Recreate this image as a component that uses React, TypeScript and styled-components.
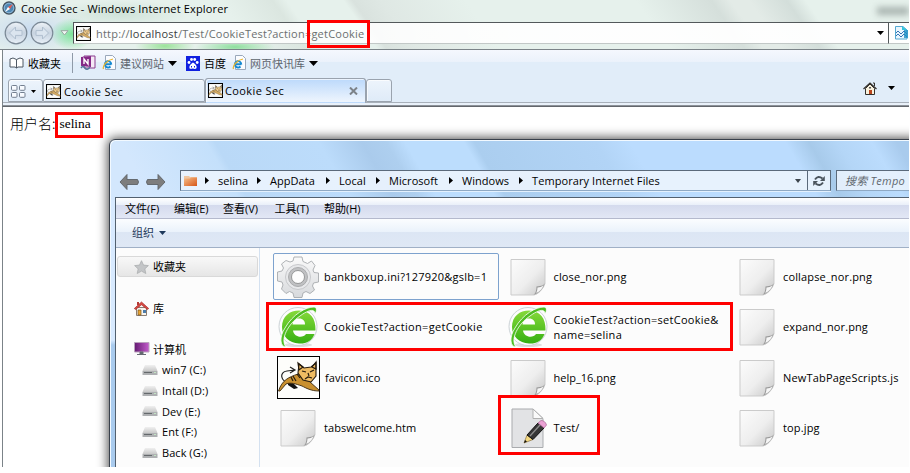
import React from "react";
import styled, { createGlobalStyle } from "styled-components";

const GlobalStyle = createGlobalStyle`
  html, body { margin: 0; background: #fff; overflow: hidden; }
  * { box-sizing: border-box; }
  svg { display: block; flex: none; }
`;

const Screen = styled.main`
  position: relative;
  width: 909px;
  height: 467px;
  overflow: hidden;
  background: #fff;
  color: #000;
  font: 11px/15px "Open Sans", "Noto Sans CJK SC", sans-serif;
`;

const Browser = styled.section`
  display: flex;
  flex-direction: column;
  height: 100%;
`;

const Label = styled.span<{ $ls?: number; $ml?: number; $color?: string; $size?: number }>`
  flex: none;
  white-space: nowrap;
  letter-spacing: ${(p) => p.$ls ?? 0}px;
  margin-left: ${(p) => p.$ml ?? 0}px;
  color: ${(p) => p.$color ?? "inherit"};
  font-size: ${(p) => p.$size ?? 11}px;
`;

const Chrome = styled.header`
  height: 50px;
  flex: none;
  border-bottom: 1px solid #7b8388;
  background:
    radial-gradient(ellipse 22px 16px at 72px 34px, #62e283cc, transparent),
    radial-gradient(ellipse 30px 9px at 165px 46px, #9be39a, transparent),
    radial-gradient(ellipse 40px 8px at 235px 47px, #8edf9d, transparent),
    radial-gradient(ellipse 60px 26px at 30px 30px, #c9dbf0, transparent),
    radial-gradient(ellipse 70px 14px at 120px 14px, #c4dcd0aa, transparent),
    linear-gradient(55deg, transparent 27%, #dbe6e0 32.5%, transparent 34%, transparent 40%, #d9e2de 41%, #dfe8e4 44%, transparent 53%, transparent 71%, #d5dfdb 79%, #e3ebe7 81%, #e3ebe7 83%, #d3deda 87%, transparent 89%),
    #e6f1ec;
`;

const TitleBar = styled.div`
  height: 22px;
  display: flex;
  align-items: flex-start;
  padding: 1px 0 0 2px;
`;

const TitleBlur = styled.span`
  width: 32px;
  height: 8px;
  margin: 6px 0 0 auto;
  filter: blur(3px);
  background: #a9b4b0;
`;

const AddressRow = styled.div`
  height: 22px;
  display: flex;
  align-items: center;
  padding-left: 4px;
`;

const AddressField = styled.div`
  display: flex;
  align-items: center;
  flex: none;
  width: 816px;
  height: 22px;
  margin-left: 4px;
  padding: 0 4px 0 2px;
  border: 1px solid #53595b;
  border-bottom-color: #c2c8c7;
  background: linear-gradient(90deg, #fffffff0, #ffffffd9 30%, #fffffff0 60%, #fffffff5);
`;

const Tail = styled.div`
  display: flex;
  align-items: center;
  padding-left: 6px;
  flex: 1;
  min-width: 0;
  height: 22px;
  border-top: 1px solid #53595b;
  border-bottom: 1px solid #c2c8c7;
  background: #fffffff0;
  overflow: hidden;
`;

const Spacer = styled.div`
  flex: 1;
`;

const Favorites = styled.nav`
  height: 28px;
  flex: none;
  display: flex;
  align-items: center;
  margin-left: 2px;
  padding: 0 0 2px 6px;
  border-left: 1px solid #7b8388;
  background: linear-gradient(#f5f8fe, #ebf2fb 12px, #e1edf9 12px);
`;

const FavoritesRule = styled.i`
  width: 1px;
  height: 20px;
  margin: 0 7px 0 11px;
  background: #8f9aa8;
`;

const TabRow = styled.div`
  height: 29px;
  flex: none;
  display: flex;
  align-items: flex-end;
  margin-left: 2px;
  padding: 0 0 4px 5px;
  border-left: 1px solid #7b8388;
  border-bottom: 1px solid #63676d;
  background: linear-gradient(#e1edf9 24px, #a8b0ba 24px, #a8b0ba 25px, #e9f1fa 25px, #e9f1fa 27px, #8d9299 27px);
`;

const HomeTools = styled.div`
  display: flex;
  align-items: center;
  align-self: flex-start;
  height: 20px;
  padding-right: 14px;
`;

const Tab = styled.div<{ $width: number; $active?: boolean }>`
  width: ${(p) => p.$width}px;
  height: ${(p) => (p.$active ? 25 : 23)}px;
  display: flex;
  align-items: center;
  padding: ${(p) => (p.$active ? "0 7px 0 2px" : "1px 6px 0 2px")};
  margin-bottom: ${(p) => (p.$active ? -1 : 0)}px;
  border: 1px solid #9aa3ae;
  border-bottom-color: ${(p) => (p.$active ? "transparent" : "#9aa3ae")};
  border-radius: 3px 3px 0 0;
  box-shadow: inset 1px 1px #ffffffb0;
  background: ${(p) => (p.$active ? "linear-gradient(#bcd9fb, #eef5fd)" : "linear-gradient(#edf4fc, #dfebf8)")};
`;

const Page = styled.div`
  flex: 1;
  display: flex;
  align-items: flex-start;
  margin-left: 2px;
  padding: 7px 0 0 7px;
  border-left: 1px solid #7b8388;
  font: 300 14px/18px "Noto Sans CJK SC", sans-serif;
`;

const PageValue = styled.span`
  margin-left: 4px;
  font: 13.4px/19px "Liberation Serif", serif;
`;

const Explorer = styled.section`
  position: absolute;
  left: 109px;
  top: 139px;
  width: 830px;
  height: 350px;
  display: flex;
  flex-direction: column;
  padding-left: 5px;
  border: 1.5px solid #39414c;
  border-radius: 6px 0 0 0;
  box-shadow: 0 0 11px 1px #000000b8, inset 1px 1px #f2f9ff;
  background:
    linear-gradient(60deg, #d3e7fd 5%, #c4e0fb 15%, #bad9f7 16%, #bcdcfb 28%, #aacbec 33%, #aecfef 35.8%, #bcddfd 38%, #bcddfd 44.8%, #abceef 46%, #b2d4f6 60%, #bbdcfe 64%, #bbdcfe 82%, #a7caea 84.7%, #b4d6f7 88%, #bbdcfd 92%, #a9cbed 94.800%) 0 0 / 830px 60px no-repeat,
    linear-gradient(#d8eaff 0 200px, #a9cbee 205px);
`;

const LocationRow = styled.div`
  height: 57px;
  flex: none;
  display: flex;
  align-items: flex-end;
  padding: 0 0 6px 4px;
`;

const Breadcrumb = styled.div`
  flex: none;
  width: 651px;
  height: 21px;
  display: flex;
  align-items: center;
  margin-left: 14px;
  padding-left: 2px;
  border: 1px solid #5b6a7b;
  border-bottom-color: #8fa9c4;
  box-shadow: 0 1px #e4f1fd;
  background: #eaf3fdeb;
`;

const Reload = styled.div`
  width: 23px;
  height: 19px;
  display: grid;
  place-items: center;
  border-left: 1px solid #5b6a7b;
`;

const Search = styled.div`
  flex: none;
  width: 110px;
  height: 21px;
  display: flex;
  align-items: center;
  margin-left: 5px;
  padding-left: 8px;
  border: 1px solid #5b6a7b;
  border-bottom-color: #8fa9c4;
  background: #e9f3fde0;
  color: #60676e;
  font-style: italic;
`;

const Frame = styled.div`
  flex: 1;
  display: flex;
  flex-direction: column;
  border-left: 1px solid #52606f;
  border-top: 1px solid #52606f;
`;

const MenuBar = styled.nav`
  height: 21px;
  display: flex;
  align-items: center;
  padding: 0 0 0 9px;
  border-bottom: 1px solid #b4b9cd;
  background: linear-gradient(#fff, #e9eff9 7px, #d4daed 7px, #e2e7f5);
`;

const Commands = styled.div`
  height: 29px;
  display: flex;
  align-items: center;
  padding: 0 0 1px 16px;
  border-bottom: 1px solid #a0b0c6;
  background: linear-gradient(#fbfdff, #eaf2fb 13px, #dce6f4 13px, #dfe8f5);
  color: #1e395b;
`;

const Body = styled.div`
  flex: 1;
  display: flex;
  background: #fcfcfc;
`;

const Sidebar = styled.aside`
  flex: none;
  width: 144px;
  padding: 8px 1px 0 1px;
  border-right: 1px solid #d4e1f0;
`;

const SideHead = styled.div<{ $gap?: number; $selected?: boolean }>`
  height: 21px;
  display: flex;
  align-items: center;
  margin-top: ${(p) => p.$gap ?? 0}px;
  padding-left: 16px;
  border: 1px solid ${(p) => (p.$selected ? "#d9d9d9" : "transparent")};
  border-radius: 3px;
  background: ${(p) => (p.$selected ? "linear-gradient(#f8f8f8, #e6e6e6)" : "none")};
`;

const Drive = styled.div`
  height: 20.7px;
  display: flex;
  align-items: center;
  padding-left: 25px;
`;

const Files = styled.div`
  display: grid;
  flex: none;
  align-content: start;
  grid-template-columns: repeat(3, 226px);
  grid-template-rows: repeat(4, 47px);
  column-gap: 3.5px;
  row-gap: 3.6px;
  padding: 5px 0 0 13px;
`;

const FileItem = styled.div<{ $focused?: boolean }>`
  display: flex;
  align-items: center;
  padding-left: 3px;
  border: 1px solid ${(p) => (p.$focused ? "#7da2ce" : "transparent")};
  border-radius: 2px;
`;

const FileName = styled(Label)`
  white-space: pre;
  margin-left: 5px;
  padding-bottom: 1px;
`;

const Marker = styled.div<{ $x: number; $y: number; $w: number; $h: number }>`
  position: absolute;
  left: ${(p) => p.$x}px;
  top: ${(p) => p.$y}px;
  width: ${(p) => p.$w}px;
  height: ${(p) => p.$h}px;
  border: 3px solid #f00;
`;

type ArrowProps = { w?: number; h?: number; color?: string; ml?: number };

const ArrowBox = styled.span<{ $ml: number }>`
  flex: none;
  margin-left: ${(p) => p.$ml}px;
`;

const Down = ({ w = 9, h = 5, color = "#000", ml = 0 }: ArrowProps) => (
  <ArrowBox $ml={ml}>
    <svg width={w} height={h} viewBox="0 0 8 4" preserveAspectRatio="none"><path d="M0 0h8L4 4z" fill={color} /></svg>
  </ArrowBox>
);

const HollowDown = () => (
  <ArrowBox $ml={6}>
    <svg width="9" height="6" viewBox="0 0 9 6"><path d="M1 .7h7L4.500 5z" fill="#f2f8f4" stroke="#9aa6a2" /></svg>
  </ArrowBox>
);

const Right = ({ ml = 0 }: { ml?: number }) => (
  <ArrowBox $ml={ml}>
    <svg width="4" height="7" viewBox="0 0 4 7"><path d="M0 0v7l4-3.5z" /></svg>
  </ArrowBox>
);

const CatArt = () => (
  <>
    <path d="M13 28C3 25 2 16 10 15l8-1M13 11l5 3-5 3" fill="none" stroke="#222" strokeWidth="1.2" />
    <path d="M11 26l5 1 5 5-4 1-6-4z" fill="#111" />
    <path d="M1.500 35C5 24 12 21 21 18l9 3 3 5 9 8v1c-8 0-13-3-17-5-6-2-11-4-16-2l-6 7z" fill="#c9902f" stroke="#3b2a12" strokeWidth=".9" />
    <path d="M22 8l5 4 7-1 5-4 0 13-5 6-8-2-5-7z" fill="#eebb62" stroke="#241a0e" strokeWidth="1.1" />
    <path d="M21 7l5 4-4 3zM39 6l-4 5 4 2zM25 15l4 1m4 0l4-2M31 17l1 3m-4 3 3-2 4 1M16 20l3 5m-5-4 2 4m4-7 3 4" fill="none" stroke="#241a0e" strokeWidth="1.2" />
  </>
);

const CatIcon = ({ size }: { size: number }) => (
  <svg width={size} height={size} viewBox="0 0 43 43">
    <rect x="0" y="0" width="43" height="43" fill="#000" />
    <rect x={size < 20 ? 3 : 1} y={size < 20 ? 3 : 1} width={size < 20 ? 37 : 41} height={size < 20 ? 37 : 41} fill="#fdfdfb" />
    <g opacity={size < 20 ? 0.75 : 1}><CatArt /></g>
  </svg>
);

const Globe = () => (
  <svg width="14" height="14" viewBox="0 0 14 14">
    <circle cx="7" cy="7" r="6" fill="#4f87b3" stroke="#45545f" strokeWidth="1.3" />
    <circle cx="7" cy="7" r="4.8" fill="none" stroke="#a9d0ea" strokeWidth=".7" />
    <path d="M11 3L8 8 6 6z" fill="#e9584a" /><path d="M3 11l3-5 2 2z" fill="#fff" />
  </svg>
);

const NavCircle = ({ flip = false }: { flip?: boolean }) => (
  <svg width="24" height="24" viewBox="0 0 24 24">
    <defs><linearGradient id="navFill" x2="0" y2="1"><stop stopColor="#eef3f8" /><stop offset=".5" stopColor="#c7d3e0" /><stop offset="1" stopColor="#e8f0f8" /></linearGradient></defs>
    <circle cx="12" cy="12" r="10.8" fill="url(#navFill)" stroke="#7b8996" strokeWidth="1.2" />
    <path d="M5.5 12l6-6v3.6h6.5v4.8h-6.5V18z" fill="#dbe5ef" stroke="#b0bfcf" transform={flip ? "translate(24 0) scale(-1 1)" : undefined} />
  </svg>
);

const BookIcon = () => (
  <svg width="15" height="12" viewBox="0 0 15 12" fill="#fff" stroke="#4f5965">
    <path d="M1 2l3-1 3.5 1.5L11 1l3 1v8H9L7.5 11 6 10H1zM7.500 2.500V11" />
  </svg>
);

const NoteIcon = () => (
  <svg width="16" height="16" viewBox="0 0 16 16">
    <path d="M4 1h11v12H4z" fill="#f6e9f6" stroke="#8b3d8f" /><path d="M1 2l10-1v11L1 11z" fill="#852a87" />
    <path d="M4 9V4l4 5V4" fill="none" stroke="#fff" strokeWidth="1.4" />
    <path d="M1 13q2-3 4 0t5-1" fill="none" stroke="#54779a" strokeWidth="1.5" />
  </svg>
);

const IePage = () => (
  <svg width="15" height="16" viewBox="0 0 15 16">
    <path d="M3.500.5h7l3 3v11h-10z" fill="#fbfcff" stroke="#9aa8bb" />
    <path d="M9.300 9.300H3.200M9.300 9.500A3.200 3.200 0 1 0 8.500 11.500" fill="none" stroke="#1689d2" strokeWidth="1.900" />
    <path d="M1.500 14C.2 11 5 5 11 4" fill="none" stroke="#eab32c" strokeWidth="1.200" />
  </svg>
);

const PawIcon = () => (
  <svg width="14" height="15" viewBox="0 0 14 15">
    <path d="M0 0h14v15H0z" fill="#1020e0" />
    <g fill="#fff"><circle cx="3" cy="6.500" r="1.400" /><circle cx="5.500" cy="3.500" r="1.400" /><circle cx="8.700" cy="3.500" r="1.400" /><circle cx="11.200" cy="6.500" r="1.400" /><path d="M7 6.500c2 1 4 3 3.600 5S8 13 7 12.500 3.500 14 3.400 11.500 6 7 7 6.500z" /></g>
    <path d="M5.500 10v1.500m3-1.500v1.500" stroke="#1020e0" />
  </svg>
);

const HomeIcon = () => (
  <svg width="14" height="13" viewBox="0 0 14 13">
    <path d="M2.500 6.500L7 2l4.500 4.500v6h-9z" fill="#f8f1dd" stroke="#33312d" />
    <path d="M0.500 7l6.500-6L13.500 7" fill="none" stroke="#33312d" strokeWidth="1.200" />
    <path d="M10 1h1.500v3" fill="none" stroke="#33312d" /><path d="M6 8h3v4H6z" fill="#b9441c" /><path d="M6 5h2v1.500H6z" fill="#555" />
  </svg>
);

const GridIcon = () => (
  <svg width="15" height="13" viewBox="0 0 15 13" fill="#f8fbff" stroke="#737f90">
    <rect x=".5" y=".5" width="5.500" height="4.800" rx="1" /><rect x="8.500" y=".5" width="5.500" height="4.800" rx="1" />
    <rect x=".5" y="7.500" width="5.500" height="4.800" rx="1" /><rect x="8.500" y="7.500" width="5.500" height="4.800" rx="1" />
  </svg>
);

const BrokenPage = () => (
  <svg width="14" height="14" viewBox="0 0 14 14">
    <path d="M.5.5H8l4 3.500v9H.5z" fill="#e9f6fd" stroke="#53a9d2" /><path d="M7 0v4h5" fill="#35c4dc" />
    <path d="M1 7l2-2 3 3 3-3 3 3M1 10l2-2 3 3 3-3 3 3" fill="none" stroke="#3574b5" /><path d="M9 4h4v8H9z" fill="#1c8ec4" opacity=".8" />
  </svg>
);

const NavArrows = () => (
  <svg width="47" height="18" viewBox="0 0 47 18" fill="#7d7d7d" stroke="#5d6267" strokeWidth=".9">
    <path d="M1 9l7-7.500v5h10.500q2 2.500 0 5H8v5z" /><path d="M46 9l-7-7.500v5H28.500q-2 2.500 0 5H39v5z" />
  </svg>
);

const Folder = () => (
  <svg width="15" height="12" viewBox="0 0 15 12">
    <defs><linearGradient id="folderFill" x2="1" y2="1"><stop stopColor="#f6c08c" /><stop offset="1" stopColor="#d75617" /></linearGradient></defs>
    <path d="M1 1h5l1 1h7v5H1z" fill="#efc6a0" /><path d="M1 3.500h6l1-1h6V11H1z" fill="url(#folderFill)" />
  </svg>
);

const ReloadIcon = () => (
  <svg width="14" height="12" viewBox="0 0 14 12" fill="none" stroke="#4b545d" strokeWidth="1.900">
    <path d="M3 4.500Q6 0 10.500 3.500M11 7.500Q8 12 3.500 8.500" /><path d="M12.800 1v5H8zM1.200 11V6H6z" fill="#4b545d" stroke="none" />
  </svg>
);

const Star = () => (
  <svg width="15" height="14" viewBox="0 0 15 14"><path d="M7.500.7l2 4.400 4.900.5-3.600 3.300 1 4.600-4.300-2.400-4.300 2.400 1-4.600L.6 5.600l4.900-.5z" fill="#c3c5c7" stroke="#acaeb0" strokeWidth=".8" /></svg>
);

const Library = () => (
  <svg width="15" height="15" viewBox="0 0 15 15">
    <path d="M2.500 6.500h10v8h-10z" fill="#f7f4ee" stroke="#8b7d72" /><path d="M.3 7.500L7.500 1l7.200 6.500-1.300 1L7.500 3.800 1.600 8.500z" fill="#d94a43" stroke="#a42d2b" strokeWidth=".7" />
    <path d="M3 1h2v3H3z" fill="#b43b36" /><path d="M4 9h3v5H4z" fill="#eda634" stroke="#755320" strokeWidth=".7" /><path d="M9 9h3v3H9z" fill="#4c7cab" />
  </svg>
);

const Monitor = () => (
  <svg width="16" height="14" viewBox="0 0 16 14">
    <defs><linearGradient id="monitorFill" x2="1"><stop stopColor="#641a72" /><stop offset="1" stopColor="#c45dcc" /></linearGradient></defs>
    <path d="M.5.5h14.500v9.500H.5z" fill="url(#monitorFill)" stroke="#b9a2bd" /><path d="M6 10h3v2H6zM3 12.500h9" fill="#656971" stroke="#656971" />
  </svg>
);

const DriveIcon = () => (
  <svg width="16" height="12" viewBox="0 0 16 12">
    <defs><linearGradient id="driveFill" x2="0" y2="1"><stop stopColor="#f0f0f0" /><stop offset="1" stopColor="#c9c9c9" /></linearGradient></defs>
    <path d="M3 1h10l2.500 6H.5z" fill="url(#driveFill)" /><path d="M.5 7h15v4H.5z" fill="#aeb0b2" /><path d="M2 8.500h8" stroke="#65696c" /><path d="M12 8.500h2" stroke="#c4e4c4" />
  </svg>
);

const Gear = () => (
  <svg width="42" height="42" viewBox="-21 -21 42 42">
    <defs><linearGradient id="gearFill" x2="0" y2="1"><stop stopColor="#fafafa" /><stop offset="1" stopColor="#d7d9dc" /></linearGradient></defs>
    <g fill="url(#gearFill)" stroke="#a7aaae" strokeWidth=".9" strokeLinejoin="round">
      <path d="M-4-20H4L5-15.500 9.500-13.500 13.500-16 17-11.500 15-7 16-4.500 20.500-4V5L15.500 6 14.500 9 16.500 13 12 16.500 8 14.500 5 16 4 20.500H-4L-5 16-8.500 14.500-12 16.500-16.500 12-15 8-16 5-20.500 4V-5L-16-6-14.500-9-16.500-13-12-16.500-8-15-5-16z" />
      <circle r="12.500" fill="#e7e8ea" stroke="#c3c4c7" /><circle r="9.500" fill="#c0c1c3" stroke="#a5a6a8" /><circle r="6.500" fill="#fdfdfd" stroke="#8d8e90" />
    </g>
  </svg>
);

const GreenE = () => (
  <svg width="42" height="42" viewBox="0 0 42 42">
    <defs><linearGradient id="greenFill" x2="0" y2="1"><stop stopColor="#86d93a" /><stop offset="1" stopColor="#35b012" /></linearGradient></defs>
    <ellipse cx="21" cy="39" rx="14" ry="2" fill="#ddd" />
    <circle cx="21" cy="20.500" r="19" fill="#fdfdfd" stroke="#cbd2d6" />
    <path fillRule="evenodd" d="M38.500 24.500H16c1 7 10 8 13 3.500h8.500C35 35 29 38 22 37.500 12 37 5 30 5 21 5 10 13 4.500 22 4.500 33 5 39 12 38.500 24.500zM15.500 18.500H28c0-3.500-2-6-6-6S16 15 15.500 18.500z" fill="url(#greenFill)" />
    <path d="M9 41C3 41 2 31 8 22 16 8 29 1 37 1c3 0 3 4 1 7 0-6-7-4-15 2C11 18 3 33 9 41z" fill="#4fbd22" stroke="#fff" strokeWidth=".8" />
  </svg>
);

const Blank = () => (
  <svg width="42" height="42" viewBox="0 0 42 42">
    <defs><linearGradient id="paperFill" x2="1" y2="1"><stop stopColor="#fcfcfc" /><stop offset=".55" stopColor="#eeeeee" /><stop offset="1" stopColor="#c6c6c6" /></linearGradient></defs>
    <path d="M4 3.500h34v24q-1 4-5 8-3 3-6 3.500H4z" fill="url(#paperFill)" stroke="#cbcbcb" />
    <path d="M38 27q-1 3-8.500 3.500 0 6-3 8.500Q35 36 38 27z" fill="#999" /><path d="M36.500 29.500q-3 2-6 1.900 0 3-1.200 5.600 5-2 7.200-7.500z" fill="#f7f7f7" />
  </svg>
);

const Edited = () => (
  <svg width="42" height="42" viewBox="0 0 42 42">
    <path d="M5 2h21l10 9.500V40.500H5z" fill="#e2e3e5" stroke="#a9abae" /><path d="M26 2v9.500h10z" fill="#fafafa" stroke="#b0b0b0" />
    <path d="M17 36l3-8 6 4.500z" fill="#f4d982" stroke="#765b25" strokeWidth=".6" /><path d="M17 36l1-3 2 1.400z" fill="#111" />
    <path d="M20 28L31 16l6 5-11 11.500z" fill="#363636" stroke="#111" /><path d="M23 29L33 18" stroke="#8d8d8d" strokeWidth="1.300" />
    <path d="M31 16l3-2.500q4 0 5.500 4.500L37 21z" fill="#eba1d4" stroke="#ad6d9c" strokeWidth=".8" />
  </svg>
);

const icons = { gear: Gear, green: GreenE, blank: Blank, edited: Edited, cat: () => <CatIcon size={43} /> };

const files: { name: string; icon: keyof typeof icons; ls?: number }[] = [
  { name: "bankboxup.ini?127920&gslb=1", icon: "gear", ls: 0.23 },
  { name: "close_nor.png", icon: "blank", ls: 0.15 },
  { name: "collapse_nor.png", icon: "blank", ls: 0.15 },
  { name: "CookieTest?action=getCookie", icon: "green", ls: 0.33 },
  { name: "CookieTest?action=setCookie&\nname=selina", icon: "green", ls: 0.29 },
  { name: "expand_nor.png", icon: "blank", ls: 0.12 },
  { name: "favicon.ico", icon: "cat", ls: 0.1 },
  { name: "help_16.png", icon: "blank" },
  { name: "NewTabPageScripts.js", icon: "blank", ls: 0.17 },
  { name: "tabswelcome.htm", icon: "blank", ls: 0.05 },
  { name: "Test/", icon: "edited", ls: 0.1 },
  { name: "top.jpg", icon: "blank", ls: 0.15 },
];

const CrumbSlot = styled.div<{ $w: number }>`
  width: ${(p) => p.$w}px;
  flex: none;
  display: flex;
  align-items: center;
`;

const MenuItem = styled.span<{ $w: number }>`
  width: ${(p) => p.$w}px;
  white-space: nowrap;
  padding-top: 1px;
`;

const crumbs = [
  { name: "selina", width: 52 },
  { name: "AppData", width: 69 },
  { name: "Local", width: 50 },
  { name: "Microsoft", width: 73 },
  { name: "Windows", width: 70 },
];

const menus = [
  { name: "文件(F)", width: 49 },
  { name: "编辑(E)", width: 49 },
  { name: "查看(V)", width: 51.500 },
  { name: "工具(T)", width: 49.500 },
  { name: "帮助(H)", width: 50 },
];

export default function App() {
  return (
    <>
      <GlobalStyle />
      <Screen>
        <Browser>
          <Chrome>
            <TitleBar><Globe /><Label $ml={5} $ls={0.15}>Cookie Sec - Windows Internet Explorer</Label><TitleBlur /></TitleBar>
            <AddressRow>
              <NavCircle /><ArrowBox $ml={2} /><NavCircle flip />
              <HollowDown />
              <AddressField>
                <CatIcon size={15} />
                <Label $ml={5} $color="#6b7070" $ls={0.22}>http://<Label $color="#3a3d3d" $ls={0.22}>localhost</Label>/Test/CookieTest?action=getCookie</Label>
                <Spacer /><Down w={7} h={4} />
              </AddressField>
              <Tail><BrokenPage /></Tail>
            </AddressRow>
          </Chrome>
          <Favorites>
            <BookIcon /><Label $ml={4}>收藏夹</Label><FavoritesRule />
            <NoteIcon /><ArrowBox $ml={6} /><IePage /><Label $ml={3} $color="#5f666e">建议网站</Label><Down ml={4} />
            <ArrowBox $ml={9} /><PawIcon /><Label $ml={4}>百度</Label>
            <ArrowBox $ml={6} /><IePage /><Label $ml={3} $color="#5f666e">网页快讯库</Label><Down ml={4} />
          </Favorites>
          <TabRow>
            <Tab $width={35}><GridIcon /><Spacer /><Down w={5} h={3} /></Tab>
            <Tab $width={162}><CatIcon size={15} /><Label $ml={3} $ls={0.4}>Cookie Sec</Label></Tab>
            <Tab $width={161} $active><CatIcon size={15} /><Label $ml={2} $ls={0.4}>Cookie Sec</Label><Spacer /><svg width="9" height="8" viewBox="0 0 9 8"><path d="M1 .5l7 7m0-7l-7 7" stroke="#7c8288" strokeWidth="2" /></svg></Tab>
            <Tab $width={26} />
            <Spacer /><HomeTools><HomeIcon /><Down w={7} h={4} ml={11} /></HomeTools>
          </TabRow>
          <Page>用户名:<PageValue>selina</PageValue></Page>
        </Browser>

        <Explorer>
          <LocationRow>
            <NavArrows />
            <Breadcrumb>
              <Folder /><ArrowBox $ml={7} />
              {crumbs.map((c) => <CrumbSlot key={c.name} $w={c.width}><Right /><Label $ml={9} $ls={0.05}>{c.name}</Label></CrumbSlot>)}
              <Right /><Label $ml={9} $ls={0.08}>Temporary Internet Files</Label>
              <Spacer /><Down w={6} h={4} color="#3d454d" /><ArrowBox $ml={6} /><Reload><ReloadIcon /></Reload>
            </Breadcrumb>
            <Search><Label $ls={0.25}>搜索 Tempo</Label></Search>
          </LocationRow>
          <Frame>
            <MenuBar>{menus.map((m) => <MenuItem key={m.name} $w={m.width}>{m.name}</MenuItem>)}</MenuBar>
            <Commands>组织<Down w={7} h={4} color="#1e395b" ml={5} /></Commands>
            <Body>
              <Sidebar>
                <SideHead $selected><Star /><Label $ml={4}>收藏夹</Label></SideHead>
                <SideHead $gap={20.500}><Library /><Label $ml={4}>库</Label></SideHead>
                <SideHead $gap={20}><Monitor /><Label $ml={3}>计算机</Label></SideHead>
                {["win7 (C:)", "Intall (D:)", "Dev (E:)", "Ent (F:)", "Back (G:)"].map((d) => (
                  <Drive key={d}><DriveIcon /><Label $ml={4} $ls={0.05}>{d}</Label></Drive>
                ))}
              </Sidebar>
              <Files>
                {files.map((f, i) => {
                  const Icon = icons[f.icon];
                  return <FileItem key={f.name} $focused={i === 0}><Icon /><FileName $ls={f.ls}>{f.name}</FileName></FileItem>;
                })}
              </Files>
            </Body>
          </Frame>
        </Explorer>

        <Marker $x={307} $y={20} $w={63} $h={28} />
        <Marker $x={55} $y={112} $w={48} $h={26} />
        <Marker $x={266} $y={302} $w={467} $h={49} />
        <Marker $x={498} $y={395} $w={102} $h={60} />
      </Screen>
    </>
  );
}
